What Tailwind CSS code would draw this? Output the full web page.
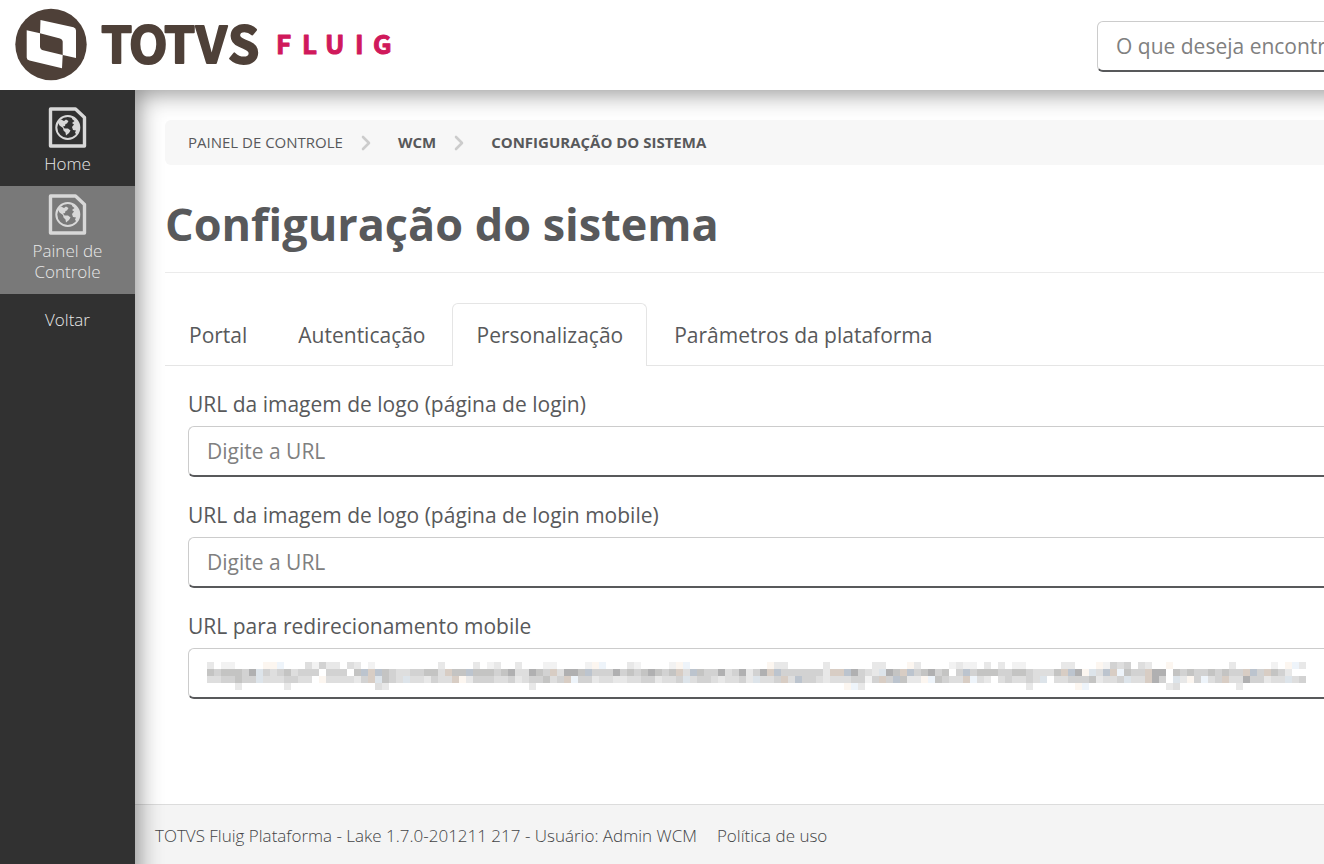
<!DOCTYPE html>
<html lang="pt-BR">
<head>
    <meta charset="UTF-8">
    <meta name="viewport" content="width=device-width, initial-scale=1.0">
    <title>TOTVS Fluig - Configuração do sistema</title>
    <script src="https://cdn.jsdelivr.net/npm/@tailwindcss/browser@4"></script>
</head>
<body class="min-h-screen flex flex-col overflow-x-hidden bg-white font-['Open_Sans','Noto_Sans',sans-serif] text-[#58595b]">
    <!-- Icons -->
    <svg class="hidden">
        <symbol id="icon-page" viewBox="0 0 40 42">
            <path d="M2.500 3H27.500L36.500 11.500V40H2.500Z" fill="none" stroke="currentColor" stroke-width="3.400" stroke-linejoin="round"/>
            <circle cx="19.800" cy="21.500" r="11.500" fill="none" stroke="currentColor" stroke-width="2"/>
            <path d="M9.500 16L13 13.500L16 15L18 13.500L20.500 15L19 17.500L17.500 18L17 20L15 20.500L16.500 22.500L20 22.500L22.500 24.500L21 27L18 29.500L17.500 26.500L15.500 24.500L15 22L11.500 19.500Z" fill="currentColor"/>
            <path d="M23 10.500L28 13L31 18V25L28.500 29L27 26.500L28 24.500L25 24L24 21L26 18.500L24 17L26.500 15L24.500 13.500Z" fill="currentColor"/>
        </symbol>
        <symbol id="icon-chevron" viewBox="0 0 10 16">
            <path d="M2 2L8 8L2 14" fill="none" stroke="currentColor" stroke-width="2.600" stroke-linecap="round" stroke-linejoin="round"/>
        </symbol>
    </svg>

    <!-- Header -->
    <header class="h-[90px] shrink-0 flex justify-between bg-white">
        <a href="#" class="shrink-0" aria-label="TOTVS Fluig">
            <svg class="w-[400px] h-[90px]" viewBox="0 0 400 90">
                <circle cx="51" cy="44.500" r="35.700" fill="#4e4038"/>
                <path d="M40.500 20L73.500 27.300Q76 28 76 30.500V58L62.700 55V41.500Q62.700 39.300 60 38.500L40 33.300Z" fill="#fff"/>
                <path d="M26.700 30.300L40 33.300V46.500Q40 49.300 43 50.200L62.700 55L62 68.300L29.500 60.500Q26.700 59.800 26.700 57.500Z" fill="#fff"/>
                <text y="63" x="101 129 164 196 228" class="font-['Noto_Sans_CJK_JP',sans-serif] font-bold text-[50px]" fill="#4e4038" stroke="#4e4038" stroke-width="2" stroke-linejoin="round">TOTVS</text>
                <text y="54" x="276 302 325 355 373" class="font-['Noto_Sans_CJK_JP',sans-serif] font-bold text-[26px]" fill="#d0195b" stroke="#d0195b" stroke-width="1" stroke-linejoin="round">FLUIG</text>
            </svg>
        </a>
        <div class="w-[227px] shrink-0 pt-[21px] overflow-hidden">
            <input type="search" aria-label="Buscar" placeholder="O que deseja encontrar?" class="block w-[300px] h-[51px] px-[18px] rounded-md border border-[#ccc] border-b-2 border-b-[#58595b] text-[21px] placeholder:text-[#808080]">
        </div>
    </header>

    <div class="flex-1 flex">
        <!-- Sidebar -->
        <nav class="w-[135px] shrink-0 bg-[#313131] text-[#e8e8e8] text-[17px] leading-[21px] font-[350] text-center">
            <a href="#" class="h-24 pt-4 flex flex-col items-center">
                <svg class="w-10 h-[42px] mb-[5px] text-[#d8d8d8]"><use href="#icon-page"/></svg>
                Home
            </a>
            <a href="#" class="h-[108px] pt-[7px] px-6 flex flex-col items-center bg-[#797979]">
                <svg class="w-10 h-[42px] mb-[5px] text-[#d8d8d8] shrink-0"><use href="#icon-page"/></svg>
                Painel de Controle
            </a>
            <a href="#" class="block py-[15px]">Voltar</a>
        </nav>

        <div class="flex-1 min-w-0 flex flex-col relative overflow-hidden">
            <main class="flex-1 pl-[30px] pt-[30px]">
                <ol class="h-[45px] pl-[23px] flex items-center bg-[#f7f7f7] rounded-l-md text-[15px]">
                    <li><a href="#">PAINEL DE CONTROLE</a></li>
                    <li class="mx-[18px] text-[#ccc]"><svg class="w-2.5 h-4"><use href="#icon-chevron"/></svg></li>
                    <li class="ml-[9px] font-bold"><a href="#">WCM</a></li>
                    <li class="mx-[18px] text-[#ccc]"><svg class="w-2.5 h-4"><use href="#icon-chevron"/></svg></li>
                    <li class="ml-[9px] font-bold">CONFIGURAÇÃO DO SISTEMA</li>
                </ol>

                <h1 class="pt-[29px] pb-[18px] border-b border-[#ebebeb] text-[45px] leading-[60px] font-bold">Configuração do sistema</h1>

                <div class="mt-[30px] flex items-end border-b border-[#e5e5e5] text-[21px]" role="tablist">
                    <button type="button" role="tab" class="h-[62px] px-6 pt-1">Portal</button>
                    <button type="button" role="tab" class="h-[62px] pl-[27px] pr-[26px] pt-1">Autenticação</button>
                    <button type="button" role="tab" aria-selected="true" class="h-[63px] -mb-px pl-6 pr-[23px] pt-0.5 border border-b-0 border-[#e5e5e5] rounded-t-md bg-white">Personalização</button>
                    <button type="button" role="tab" class="h-[62px] px-[27px] pt-1">Parâmetros da plataforma</button>
                </div>

                <form class="pl-[23px] pt-[22px] text-[21px] leading-[32px]">
                    <div class="mb-[22px]">
                        <label for="logo-login" class="block mb-1.5">URL da imagem de logo (página de login)</label>
                        <input id="logo-login" type="text" placeholder="Digite a URL" class="block w-full h-[51px] px-[18px] rounded-l-md border border-r-0 border-[#ccc] border-b-2 border-b-[#58595b] placeholder:text-[#808080]">
                    </div>
                    <div class="mb-[22px]">
                        <label for="logo-mobile" class="block mb-1.5">URL da imagem de logo (página de login mobile)</label>
                        <input id="logo-mobile" type="text" placeholder="Digite a URL" class="block w-full h-[51px] px-[18px] rounded-l-md border border-r-0 border-[#ccc] border-b-2 border-b-[#58595b] placeholder:text-[#808080]">
                    </div>
                    <div>
                        <label for="redirect" class="block mb-1.5">URL para redirecionamento mobile</label>
                        <div class="relative">
                            <input id="redirect" type="text" class="block w-full h-[51px] px-[18px] rounded-l-md border border-r-0 border-[#ccc] border-b-2 border-b-[#58595b]">
                            <svg id="mosaic" class="absolute left-[19px] top-3.5 w-[1099px] h-7 pointer-events-none" shape-rendering="crispEdges" aria-hidden="true"></svg>
                        </div>
                    </div>
                </form>
            </main>

            <!-- Footer -->
            <footer class="h-[60px] pl-5 pt-0.5 flex items-center gap-5 bg-[#f4f4f4] border-t border-[#dcdcdc] text-[17px] font-light text-[#434446]">
                <span>TOTVS Fluig Plataforma - Lake 1.7.0-201211 217 - Usuário: Admin WCM</span>
                <a href="#">Política de uso</a>
            </footer>
            <div class="absolute inset-0 pointer-events-none shadow-[inset_3px_3px_24px_rgba(0,0,0,0.45)] -right-16 -bottom-16"></div>
        </div>
    </div>

    <script>
        // Hidden URL: each letter is the shade of one 7px block
        var shades = {
            a: '#f2f2f2', b: '#e8e8e8', c: '#dedede', d: '#d2d2d2', e: '#c4c4c3', f: '#b0b0b1',
            w: '#fcf6f0', k: '#eef4fa', W: '#d8cdc4', K: '#bcc4ce', B: '#dde4ea'
        };
        var rows = [
            'b.aa....wwk...cadbb.cb.a.........b....b.ab..b...aa....awk...ba....awk...........wbb.....b......bb...wb....abaa.b.b.aa.....bb...wadcd.cb..w........b.....a.wkb',
            'edeeedfBdcdecddd.ddd.eKWKedccddeecWeeKeeedefccfedWcffeKdddfdedefedeWcKeddfcdfbdfWKddddddbWWKfdcbBfeWKdefde.dKdeeeddeedccceWKfwBcKWkeddWff.ededdededdWKdWedb',
            'ccddeddBcccddcc.wccccbdWBedcBccbdccWwbdddccdbcddecdWkddbccbbccddbccdBcddcbccdbBccdWcKddcbcccddadWdKebbwkedccWkcb.cdccdcB.ccdddebccdBccWfd.BbwdkcdWccfddbccBcdd.'
        ];
        rows.push('....b......b............cb....................b............................................wkb.......................b......wk...........bc........b.........');
        var svg = document.getElementById('mosaic');
        rows.forEach(function (row, y) {
            row.slice(0, 157).split('').forEach(function (shade, x) {
                if (shade === '.') return;
                var rect = document.createElementNS('http://www.w3.org/2000/svg', 'rect');
                rect.setAttribute('x', x * 7);
                rect.setAttribute('y', y * 7);
                rect.setAttribute('width', 7);
                rect.setAttribute('height', 7);
                rect.setAttribute('fill', shades[shade]);
                svg.appendChild(rect);
            });
        });
    </script>
</body>
</html>
